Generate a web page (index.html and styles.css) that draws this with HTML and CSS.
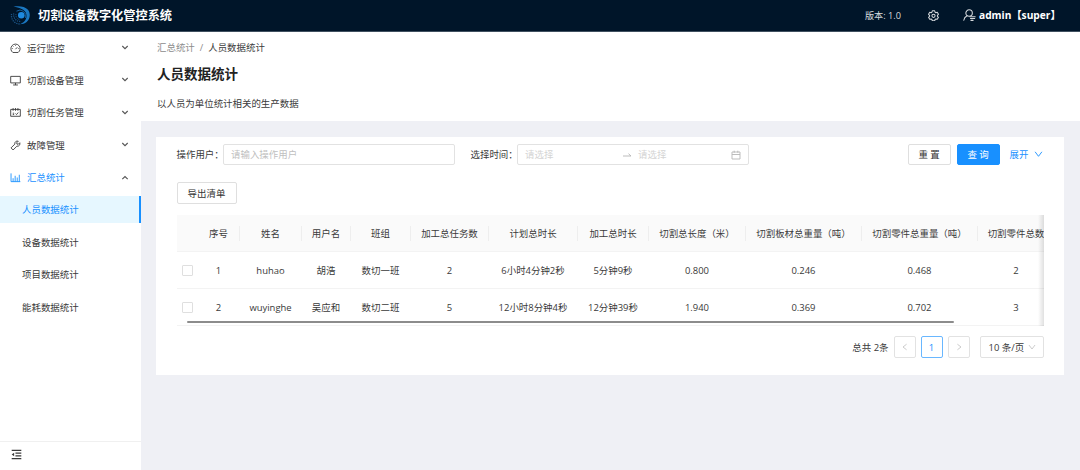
FILE: index.html
```html
<!DOCTYPE html>
<html lang="zh-CN">
<head>
    <meta charset="UTF-8">
    <meta name="viewport" content="width=device-width, initial-scale=1.0">
    <title>人员数据统计 - 切割设备数字化管控系统</title>
    <link rel="stylesheet" href="styles.css">
</head>
<body>
    <header class="header">
        <svg class="logo" viewBox="0 0 20 20" fill="none">
            <path d="M3.500 .6C9 -.4 15 .4 18 3.800C21 7.600 20 13.400 16.600 16C14.800 17.600 12.400 18.200 10 18.200C13.800 16.600 16.400 14 16.500 10C16.600 5.400 13 2.200 3.500 .6Z" fill="#1a78c2"/>
            <path d="M6.500 5.200A6 6 0 0 1 15.600 12" stroke="#17609c" stroke-width="1"/>
            <circle cx="11.300" cy="9.300" r="3.300" fill="#1e8ae0"/>
            <path d="M1.600 8A8.400 8.400 0 0 0 10.500 18" stroke="#1b578a" stroke-width="1.300" stroke-dasharray="1.200 1"/>
            <path d="M3.800 7.500A6.500 6.500 0 0 0 11 15.400" stroke="#1b578a" stroke-width="1.200" stroke-dasharray="1.100 1"/>
            <path d="M6 8A4.600 4.600 0 0 0 10 13.600" stroke="#1b578a" stroke-dasharray="1 .9"/>
        </svg>
        <span class="system-name">切割设备数字化管控系统</span>
        <span class="version">版本: 1.0</span>
        <svg class="gear" viewBox="0 0 16 16" fill="none" stroke="currentColor" stroke-width="1.5" stroke-linejoin="round">
            <path d="M6.300 1.200h3.400l.6 2 1.200.7 2-.5 1.700 2.900-1.500 1.500v1.400l1.500 1.500-1.700 2.900-2-.5-1.200.7-.6 2H6.300l-.6-2-1.200-.7-2 .5L.8 10.700l1.500-1.500V7.800L.8 6.300l1.700-2.900 2 .5 1.200-.7z"/>
            <circle cx="8" cy="8.500" r="2.300"/>
        </svg>
        <svg class="user" viewBox="0 0 16 16" fill="none" stroke="currentColor" stroke-width="1.3" stroke-linecap="round">
            <circle cx="7.500" cy="5" r="4"/>
            <path d="M5 8.300C2.700 9.400 1.300 11.200 1 13.800M8.600 9.600h6.400M9.200 11.800h5.200M9.800 14h2.600"/>
        </svg>
        <span class="user-name">admin【super】</span>
    </header>

    <div class="layout">
        <aside class="sidebar">
            <nav class="menu">
                <a class="menu-item">
                    <svg class="menu-icon" viewBox="0 0 16 16"><path d="M4.200 13.800A6.700 6.700 0 1 1 11.800 13.800zM8 9l2.600-2.800M8 3.400v1M3.400 8h1M11.600 8h1M4.700 4.800l.7.7"/></svg>
                    <span>运行监控</span>
                    <svg class="arrow" viewBox="0 0 10 10"><path d="M2.300 3l2.700 2.700L7.700 3"/></svg>
                </a>
                <a class="menu-item">
                    <svg class="menu-icon" viewBox="0 0 16 16"><path d="M1 2h14v9.500H1zM8 11.500v3M4.500 14.500h7"/></svg>
                    <span>切割设备管理</span>
                    <svg class="arrow" viewBox="0 0 10 10"><path d="M2.300 3l2.700 2.700L7.700 3"/></svg>
                </a>
                <a class="menu-item">
                    <svg class="menu-icon" viewBox="0 0 16 16"><path d="M1 3.500h14v10H1zM4.500 1.500v4M8 1.500v4M11.500 1.500v4M4 9h2M4 11h2M8 9.500l1.500 1.500 2.500-3"/></svg>
                    <span>切割任务管理</span>
                    <svg class="arrow" viewBox="0 0 10 10"><path d="M2.300 3l2.700 2.700L7.700 3"/></svg>
                </a>
                <a class="menu-item">
                    <svg class="menu-icon" viewBox="0 0 16 16"><path d="M12 1.800L9.800 4l.3 1.900 1.900.3 2.200-2.200c1 2.500-.9 5.600-4.200 5L4.500 14.500l-3-3L7 6C6.400 2.800 9.400.8 12 1.800z"/></svg>
                    <span>故障管理</span>
                    <svg class="arrow" viewBox="0 0 10 10"><path d="M2.300 3l2.700 2.700L7.700 3"/></svg>
                </a>
                <a class="menu-item open">
                    <svg class="menu-icon" viewBox="0 0 16 16"><path d="M1.500 2v12H15M4.500 14V9M7.500 14V5.500M10.500 14V8M13.500 14V4"/></svg>
                    <span>汇总统计</span>
                    <svg class="arrow" viewBox="0 0 10 10"><path d="M2.300 6.200L5 3.500l2.700 2.700"/></svg>
                </a>
                <a class="menu-item sub selected">人员数据统计</a>
                <a class="menu-item sub">设备数据统计</a>
                <a class="menu-item sub">项目数据统计</a>
                <a class="menu-item sub">能耗数据统计</a>
            </nav>
            <div class="collapse">
                <svg viewBox="0 0 16 16" fill="none" stroke="currentColor" stroke-width="1.600"><path d="M1 2h14M6.500 6H15M6.500 10H15M1 14h14"/><path d="M1 8l3.500-2.700v5.400z" fill="currentColor" stroke="none"/></svg>
            </div>
        </aside>

        <main class="main">
            <section class="page-header">
                <div class="breadcrumb"><span class="muted">汇总统计</span><span class="slash">/</span><span>人员数据统计</span></div>
                <h1>人员数据统计</h1>
                <p>以人员为单位统计相关的生产数据</p>
            </section>

            <section class="card">
                <form class="search">
                    <label class="user-label">操作用户：</label>
                    <div class="input">请输入操作用户</div>
                    <label class="time-label">选择时间：</label>
                    <div class="input range">
                        <span class="range-start">请选择</span>
                        <svg class="swap" viewBox="0 0 10 10"><path d="M1 6h8L6.500 3.700"/></svg>
                        <span class="range-end">请选择</span>
                        <svg class="calendar" viewBox="0 0 10 10"><path d="M1 2h8v7H1zM1 4.500h8M3.200 .7v2M6.800 .7v2"/></svg>
                    </div>
                    <div class="actions">
                        <button type="button" class="btn">重 置</button>
                        <button type="button" class="btn primary">查 询</button>
                        <a class="expand">展开 <svg viewBox="0 0 10 10"><path d="M1.200 2L5 7l3.800-5"/></svg></a>
                    </div>
                </form>

                <button type="button" class="btn export">导出清单</button>

                <div class="table-wrap">
                    <table>
                        <colgroup>
                            <col class="w-check"><col class="w-index"><col class="w-name"><col class="w-user"><col class="w-team"><col class="w-tasks">
                            <col class="w-plan"><col class="w-work"><col class="w-length"><col class="w-weight"><col class="w-weight"><col class="w-count">
                        </colgroup>
                        <thead>
                            <tr>
                                <th></th>
                                <th>序号</th>
                                <th>姓名</th>
                                <th>用户名</th>
                                <th>班组</th>
                                <th>加工总任务数</th>
                                <th>计划总时长</th>
                                <th>加工总时长</th>
                                <th>切割总长度（米）</th>
                                <th>切割板材总重量（吨）</th>
                                <th>切割零件总重量（吨）</th>
                                <th>切割零件总数</th>
                            </tr>
                        </thead>
                        <tbody>
                            <tr>
                                <td><span class="checkbox"></span></td>
                                <td>1</td>
                                <td>huhao</td>
                                <td>胡浩</td>
                                <td>数切一班</td>
                                <td>2</td>
                                <td>6小时4分钟2秒</td>
                                <td>5分钟9秒</td>
                                <td>0.800</td>
                                <td>0.246</td>
                                <td>0.468</td>
                                <td>2</td>
                            </tr>
                            <tr>
                                <td><span class="checkbox"></span></td>
                                <td>2</td>
                                <td>wuyinghe</td>
                                <td>吴应和</td>
                                <td>数切二班</td>
                                <td>5</td>
                                <td>12小时8分钟4秒</td>
                                <td>12分钟39秒</td>
                                <td>1.940</td>
                                <td>0.369</td>
                                <td>0.702</td>
                                <td>3</td>
                            </tr>
                        </tbody>
                    </table>
                    <div class="scrollbar"></div>
                </div>

                <div class="pagination">
                    <span class="total">总共 2条</span>
                    <a class="page"><svg viewBox="0 0 10 10"><path d="M7 1.500L2.500 5 7 8.500"/></svg></a>
                    <a class="page current">1</a>
                    <a class="page"><svg viewBox="0 0 10 10"><path d="M3 1.500L7.500 5 3 8.500"/></svg></a>
                    <div class="page-size">10 条/页 <svg viewBox="0 0 10 10"><path d="M1.200 2.500L5 7.500l3.800-5"/></svg></div>
                </div>
            </section>
        </main>
    </div>
</body>
</html>
```
FILE: styles.css
```css
* {
    margin: 0;
    padding: 0;
    box-sizing: border-box;
}

body {
    height: 100vh;
    display: flex;
    flex-direction: column;
    overflow: hidden;
    font-family: "Open Sans", "Noto Sans CJK SC", sans-serif;
    font-size: 9.45px;
    line-height: 15px;
    color: #3a3a3a;
    background: #eff0f5;
}

svg {
    display: block;
    flex: none;
}

/* Header */
.header {
    height: 32px;
    flex: none;
    display: flex;
    align-items: center;
    padding: 0 19px 0 10px;
    background: #001529;
    border-bottom: 1px solid #405060;
    color: #d5d9dd;
    white-space: nowrap;
}

.logo {
    width: 20px;
    height: 20px;
    margin-right: 8px;
}

.system-name {
    font-size: 12.2px;
    font-weight: 700;
    color: #fff;
}

.version {
    margin-left: auto;
    font-size: 9.2px;
}

.gear {
    width: 11px;
    height: 11px;
    margin: 0 24px 0 27px;
}

.user {
    width: 13px;
    height: 13px;
    margin-right: 3px;
}

.user-name {
    width: 82px;
    font-size: 10.2px;
    font-weight: 700;
    color: #fff;
}

.layout {
    flex: 1;
    min-height: 0;
    display: flex;
}

/* Sidebar */
.sidebar {
    width: 141px;
    flex: none;
    display: flex;
    flex-direction: column;
    background: #fff;
}

.menu {
    flex: 1;
    padding-top: 2.5px;
    display: flex;
    flex-direction: column;
    gap: 5.4px;
}

.menu-item {
    height: 27px;
    display: flex;
    align-items: center;
    padding: 0 11px 0 10px;
}

.menu-icon {
    width: 11px;
    height: 11px;
    margin-right: 6px;
    fill: none;
    stroke: currentColor;
    stroke-width: 1.3;
}

.arrow {
    width: 10px;
    height: 10px;
    margin-left: auto;
    fill: none;
    stroke: #555;
    stroke-width: 1.1;
}

.open {
    color: #1890ff;
}

.sub {
    padding-left: 22px;
}

.selected {
    color: #1890ff;
    background: #e6f7ff;
    border-right: 2px solid #1890ff;
}

.collapse {
    height: 29px;
    padding: 7px 11px;
    border-top: 1px solid #f0f0f0;
}

.collapse svg {
    width: 11px;
    height: 11px;
}

/* Content */
.main {
    flex: 1;
    min-width: 0;
}

.page-header {
    height: 89px;
    padding: 8px 16px;
    background: #fff;
}

.muted,
.slash {
    color: #8c8c8c;
}

.slash {
    margin: 0 5px;
}

h1 {
    margin-top: 9px;
    font-size: 13.5px;
    line-height: 20px;
    font-weight: 700;
    color: #222;
}

.page-header p {
    margin-top: 12px;
}

.card {
    height: 238px;
    margin: 16px 16px 0 15px;
    padding: 7px 20.5px 0 20.5px;
    background: #fff;
}

.search {
    display: flex;
    align-items: center;
    height: 21px;
    white-space: nowrap;
}

.user-label {
    width: 46.5px;
}

.time-label {
    width: 46.5px;
    margin-left: 15.5px;
}

.input {
    width: 232px;
    height: 21px;
    display: flex;
    align-items: center;
    padding: 0 7px;
    border: 1px solid #e2e2e2;
    border-radius: 2px;
    color: #bfbfbf;
}

.range {
    color: #d4d4d4;
}

.range-start {
    width: 97px;
}

.range-end {
    margin-left: 6px;
}

.swap,
.calendar {
    width: 10px;
    height: 10px;
    fill: none;
    stroke: #b5b5b5;
    stroke-width: 0.9;
}

.calendar {
    margin-left: auto;
}

.actions {
    margin-left: auto;
    margin-right: 1px;
    display: flex;
    align-items: center;
}

.btn {
    width: 43px;
    height: 21px;
    border: 1px solid #dfdfdf;
    border-radius: 2px;
    background: #fff;
    font: inherit;
    color: #333;
}

.primary {
    margin-left: 6px;
    background: #1890ff;
    border-color: #1890ff;
    color: #fff;
}

.expand {
    margin-left: 10px;
    display: flex;
    align-items: center;
    gap: 5px;
    color: #1890ff;
}

.expand svg {
    width: 9px;
    height: 9px;
    fill: none;
    stroke: currentColor;
}

.export {
    display: block;
    width: 60px;
    height: 22px;
    margin-top: 17px;
}

/* Table */
.table-wrap {
    position: relative;
    height: 111px;
    margin-top: 11px;
    overflow: hidden;
}

/* shade on the edge where more columns are hidden */
.table-wrap::after {
    content: "";
    position: absolute;
    top: 0;
    right: 0;
    width: 6px;
    height: 100%;
    background: linear-gradient(to right, transparent, rgba(0, 0, 0, 0.12));
}

table {
    width: 878px;
    table-layout: fixed;
    border-collapse: separate;
    border-spacing: 0;
    text-align: center;
    white-space: nowrap;
}

.w-check { width: 21px; }
.w-index { width: 42px; }
.w-name { width: 62px; }
.w-user { width: 49px; }
.w-team { width: 60px; }
.w-tasks { width: 78px; }
.w-plan { width: 89px; }
.w-work { width: 71px; }
.w-length { width: 97px; }
.w-weight { width: 116px; }
.w-count { width: 77px; }

th,
td {
    height: 37px;
    border-bottom: 1px solid #f3f3f3;
    font-weight: 400;
}

th {
    background: #fafafa linear-gradient(#eee, #eee) no-repeat right center / 1px 15px;
}

th:first-child {
    background: #fafafa;
}

.checkbox {
    display: block;
    width: 11px;
    height: 11px;
    margin-left: 5px;
    border: 1px solid #dfdfdf;
    border-radius: 1px;
}

.scrollbar {
    position: absolute;
    left: 10px;
    bottom: 3px;
    width: 767px;
    height: 2px;
    border-radius: 1px;
    background: #8c8c8c;
}

/* Pagination */
.pagination {
    margin-top: 10px;
    display: flex;
    justify-content: flex-end;
    align-items: center;
    gap: 5px;
}

.page {
    width: 22px;
    height: 22px;
    display: flex;
    align-items: center;
    justify-content: center;
    border: 1px solid #e2e2e2;
    border-radius: 2px;
}

.page svg,
.page-size svg {
    width: 8px;
    height: 8px;
    fill: none;
    stroke: #bfbfbf;
}

.current {
    border-color: #69b7ff;
    color: #1890ff;
}

.page-size {
    width: 64px;
    height: 22px;
    margin-left: 5px;
    padding: 0 7px 0 8px;
    display: flex;
    align-items: center;
    justify-content: space-between;
    border: 1px solid #e2e2e2;
    border-radius: 2px;
}
```
